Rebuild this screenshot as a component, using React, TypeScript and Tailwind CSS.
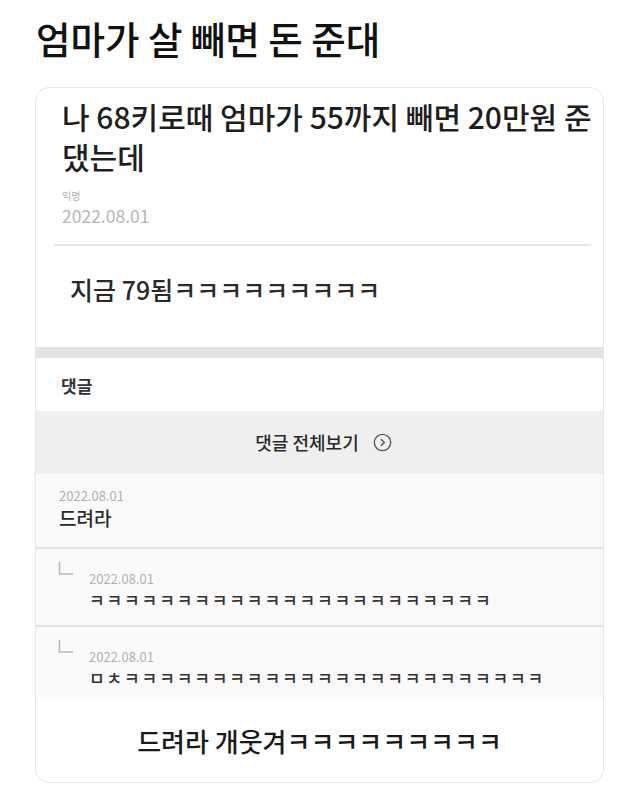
import React from "react";

const font = { fontFamily: '"Noto Sans CJK KR", "Noto Sans", sans-serif' };

function Corner() {
  return (
    <svg width="16" height="14" viewBox="0 0 16 14" className="shrink-0 -mt-[3px]">
      <path d="M1.5 0 V12 H15" fill="none" stroke="#b8b8b8" strokeWidth="1.6" />
    </svg>
  );
}

export default function App() {
  return (
    <div className="min-h-[793px] w-[640px] bg-white" style={font}>
      <div className="pl-[36px] pt-[13px] pb-[24px] text-[37.5px] leading-[50px] font-medium text-[#111]">
        엄마가 살 빼면 돈 준대
      </div>
      <div className="ml-[35px] mr-[36px] overflow-hidden rounded-[14px] border border-[#e8e8e8] bg-white">
        <div className="pl-[26px] pr-[8px] pt-[8px]">
          <div className="text-[30px] leading-[40px] font-medium text-[#1e1e1e]">
            나 68키로때 엄마가 55까지 빼면 20만원 준 댔는데
          </div>
          <div className="mt-[13px] text-[10px] leading-[14px] text-[#b0b0b0]">익명</div>
          <div className="mt-[3px] text-[17.5px] leading-[20px] text-[#b5b5b5]">2022.08.01</div>
        </div>
        <div className="ml-[18px] mr-[12px] mt-[18px] h-[2px] bg-[#e6e6e6]" />
        <div className="h-[101px] pl-[34px] pt-[28px] text-[25px] leading-[30px] font-medium text-[#2a2a2a]">
          지금 79됨ㅋㅋㅋㅋㅋㅋㅋㅋㅋ
        </div>
        <div className="h-[11px] bg-[#e4e4e4]" />
        <div className="flex h-[53px] items-center pl-[25px] pt-[2px] text-[17px] font-bold text-[#333]">
          댓글
        </div>
        <div className="flex h-[63px] items-center justify-center gap-[14px] bg-[#efefef] pl-[8px] text-[18px] font-medium text-[#2a2a2a]">
          <span>댓글 전체보기</span>
          <svg width="19" height="19" viewBox="0 0 19 19">
            <circle cx="9.5" cy="9.5" r="8.2" fill="none" stroke="#555" strokeWidth="1.3" />
            <path d="M8 6.2 L11.3 9.5 L8 12.8" fill="none" stroke="#555" strokeWidth="1.4" />
          </svg>
        </div>
        <div className="bg-[#fafafa]">
          <div className="h-[73px] pl-[23px] pt-[13px]">
            <div className="text-[13px] leading-[18px] text-[#b0b0b0]">2022.08.01</div>
            <div className="text-[19px] leading-[26px] font-medium text-[#2a2a2a]">드려라</div>
          </div>
          <div className="h-[2px] bg-[#e4e4e4]" />
          <div className="flex h-[76px] gap-[15px] pl-[22px] pt-[16px]">
            <Corner />
            <div className="pt-[5px]">
              <div className="text-[13px] leading-[18px] text-[#b0b0b0]">2022.08.01</div>
              <div className="text-[17px] leading-[24px] font-medium tracking-[1.9px] text-[#333]">
                ㅋㅋㅋㅋㅋㅋㅋㅋㅋㅋㅋㅋㅋㅋㅋㅋㅋㅋㅋㅋㅋㅋㅋ
              </div>
            </div>
          </div>
          <div className="h-[2px] bg-[#e4e4e4]" />
          <div className="flex h-[72px] gap-[15px] pl-[22px] pt-[16px]">
            <Corner />
            <div className="pt-[5px]">
              <div className="text-[13px] leading-[18px] text-[#b0b0b0]">2022.08.01</div>
              <div className="text-[17px] leading-[24px] font-medium tracking-[1.9px] text-[#333]">
                ㅁㅊㅋㅋㅋㅋㅋㅋㅋㅋㅋㅋㅋㅋㅋㅋㅋㅋㅋㅋㅋㅋㅋㅋㅋㅋ
              </div>
            </div>
          </div>
        </div>
        <div className="flex h-[83px] items-center justify-center text-[26px] font-medium text-[#1a1a1a]">
          드려라 개웃겨ㅋㅋㅋㅋㅋㅋㅋㅋㅋ
        </div>
      </div>
    </div>
  );
}
